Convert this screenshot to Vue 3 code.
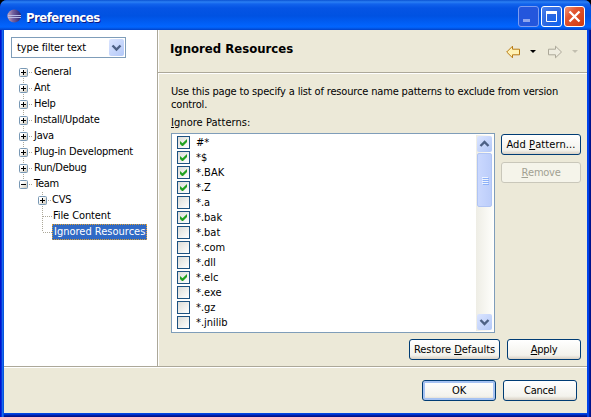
<script setup>
const tree = [
  { label: 'General', open: false }, { label: 'Ant', open: false }, { label: 'Help', open: false },
  { label: 'Install/Update', open: false }, { label: 'Java', open: false },
  { label: 'Plug-in Development', open: false }, { label: 'Run/Debug', open: false }, { label: 'Team', open: true },
]
const children = [{ label: 'CVS', box: true }, { label: 'File Content' }, { label: 'Ignored Resources', selected: true }]
const patterns = [
  ['#*', 1], ['*$', 1], ['*.BAK', 1], ['*.Z', 1], ['*.a', 0], ['*.bak', 1], ['*.bat', 0],
  ['*.com', 0], ['*.dll', 0], ['*.elc', 1], ['*.exe', 0], ['*.gz', 0], ['*.jnilib', 0],
]
</script>

<template>
  <div class="window">
    <header class="titlebar">
      <svg class="logo" width="16" height="16" viewBox="0 0 16 16">
        <defs><linearGradient id="lg" x1="0" x2="1"><stop offset="0" stop-color="#c9a9bd" /><stop offset=".4" stop-color="#75619f" /><stop offset="1" stop-color="#2c2470" /></linearGradient></defs>
        <ellipse cx="7.2" cy="8" rx="6.8" ry="6.5" fill="url(#lg)" />
        <path d="M1 7.5h13M1 9.5h13" stroke="#b9bde6" stroke-width="1" />
      </svg>
      <span class="title">Preferences</span>
      <div class="winbtns">
        <span class="wb min"><svg width="21" height="21"><rect x="5" y="13" width="7" height="3" fill="#8ea5ee" /></svg></span>
        <span class="wb"><svg width="21" height="21"><path d="M5.5 5v10.5h10V5M5 6h11" fill="none" stroke="#fff" /><rect x="5" y="5" width="11" height="3" fill="#fff" /></svg></span>
        <span class="wb close"><svg width="21" height="21"><path d="M5.5 5.5l10 10M15.5 5.5l-10 10" stroke="#fff" stroke-width="2.3" /></svg></span>
      </div>
    </header>
    <div class="main">
      <aside class="side">
        <div class="combo"><span class="t">type filter text</span><span class="drop"><svg width="15" height="17"><path d="M3.5 6.5l4 4 4-4" fill="none" stroke="#4d6185" stroke-width="2.4" /></svg></span></div>
        <div class="tree">
          <div v-for="(n, i) in tree" :key="n.label" class="node" :class="{ first: i === 0, last: i === tree.length - 1 }">
            <svg class="exp" width="9" height="9"><use :href="n.open ? '#minus' : '#plus'" /></svg><i class="dash" /><span class="t">{{ n.label }}</span>
          </div>
          <div v-for="n in children" :key="n.label" class="node child" :class="{ last: n.selected }">
            <svg v-if="n.box" class="exp" width="9" height="9"><use href="#plus" /></svg><i class="dash" :class="{ long: !n.box }" /><span class="t" :class="{ sel: n.selected }">{{ n.label }}</span>
          </div>
        </div>
      </aside>
      <section class="page">
        <div class="head">
          <h1>Ignored Resources</h1>
          <svg class="nav" width="76" height="14" viewBox="0 0 76 14">
            <path d="M.7 7L6.5 1.2v3h7v5.6h-7v3z" fill="#fff2b4" stroke="#b87a14" />
            <path d="M24 5h6l-3 3z" fill="#000" />
            <path d="M55.5 7L49.5 1.2v3h-7v5.6h7v3z" fill="#eeecdf" stroke="#aca899" />
            <path d="M66 5h6l-3 3z" fill="#c2bfb0" />
          </svg>
        </div>
        <div class="body">
          <p class="t intro">Use this page to specify a list of resource name patterns to exclude from version<br>control.</p>
          <p class="t lbl"><u>I</u>gnore Patterns:</p>
          <div class="cols">
            <div class="list">
              <div class="rows">
                <div v-for="p in patterns" :key="p[0]" class="row">
                  <span class="cb"><svg v-if="p[1]" width="11" height="11"><path d="M2 4v3l2 2h1l4-4V2L4.5 6.2z" fill="#21a121" /></svg></span><span class="t">{{ p[0] }}</span>
                </div>
              </div>
              <div class="sb">
                <span class="arrow"><svg width="15" height="16"><path d="M3.5 10l4-4 4 4" fill="none" stroke="#4d6185" stroke-width="2.4" /></svg></span>
                <span class="thumb"><i /><i /><i /><i /></span>
                <span class="arrow down"><svg width="15" height="16"><path d="M3.5 6l4 4 4-4" fill="none" stroke="#4d6185" stroke-width="2.4" /></svg></span>
              </div>
            </div>
            <div class="acts">
              <button class="btn t add">Add&nbsp;<u>P</u>attern...</button>
              <button class="btn t off"><u>R</u>emove</button>
            </div>
          </div>
          <div class="foot">
            <button class="btn t wide">Restore&nbsp;<u>D</u>efaults</button>
            <button class="btn t apply"><u>A</u>pply</button>
          </div>
        </div>
      </section>
    </div>
    <footer class="bottom">
      <button class="btn t dlg def">OK</button>
      <button class="btn t dlg">Cancel</button>
    </footer>
    <svg width="0" height="0" class="defs">
      <defs>
        <linearGradient id="bx" x1="0" y1="0" x2="1" y2="1"><stop offset=".3" stop-color="#fff" /><stop offset="1" stop-color="#c9c3b4" /></linearGradient>
        <g id="minus"><rect x=".5" y=".5" width="8" height="8" rx="1" fill="url(#bx)" stroke="#7898b5" /><path d="M2 4.5h5" stroke="#000" /></g>
        <g id="plus"><use href="#minus" /><path d="M4.5 2v5" stroke="#000" /></g>
      </defs>
    </svg>
  </div>
</template>

<style>
body { margin: 0; overflow: hidden; background: #000; }
</style>
<style scoped>
* { box-sizing: border-box; }
.window { width: 591px; height: 417px; display: flex; flex-direction: column; padding: 0 4px 4px; border-radius: 7px 7px 0 0; overflow: hidden; color: #000;
  font: 11px/13px "DejaVu Sans Condensed", "DejaVu Sans", sans-serif; font-stretch: condensed;
  background: linear-gradient(90deg, #0013cf 0 1px, #0831d9 1px 2px, #166aee 2px 3px, #0855dd 3px 4px, transparent 4px 587px, #0042ea 587px 589px, #001ea0 589px 590px, #00138c 590px), linear-gradient(#0046e0 0 414px, #0033d0 414px 415px, #001ea0 415px 416px, #00138c 416px); }
.t { letter-spacing: -.25px; white-space: nowrap; }
.titlebar { flex: none; height: 30px; margin: 0 -4px; padding: 0 6px; display: flex; align-items: center;
  background: linear-gradient(#0a52d2 0, #2b80f4 2px, #1263ec 4px, #0554e4 8px, #0052e2 16px, #0160f8 24px, #0265ff 27px, #0350dc 29px, #0040c8 30px); }
.logo { margin: 2px 0 0 1px; }
.title { font: bold 13px/16px "DejaVu Sans Condensed", sans-serif; font-stretch: condensed; color: #fff; text-shadow: 1px 1px #0a1883; margin: 5px 0 0 3px; letter-spacing: -.5px; }
.winbtns { margin-left: auto; display: flex; gap: 2px; padding-top: 3px; }
.wb { width: 21px; height: 21px; border: 1px solid #fff; border-radius: 3px; background: radial-gradient(circle at 80% 85%, #1264ef, #2a66e0 50%, #4d83ee); }
.wb svg { display: block; margin: -1px; }
.wb.min { border-color: #7d9cf0; background: #2456dc; }
.wb.close { background: linear-gradient(135deg, #ee9579, #e25530 35%, #cf3a10); }
.main { flex: none; height: 336px; display: flex; background: #ece9d8; }
.side { width: 153px; background: #fff; padding: 7px 0 0 7px; flex: none; }
.combo { width: 115px; height: 21px; border: 1px solid #7f9db9; display: flex; align-items: center; justify-content: space-between; padding: 0 1px 0 5px; }
.combo .t { letter-spacing: -.12px; }
.drop { width: 15px; height: 17px; background: linear-gradient(135deg, #dbe5ff, #b3c8f8); border-radius: 2px; }
.drop svg, .arrow svg { display: block; }
.tree { padding: 6px 0 0 8px; }
.node { height: 16px; display: flex; align-items: center; background: repeating-linear-gradient(#aca899 0 1px, #fff 1px 2px) 4px 0 / 1px 16px no-repeat; }
.node.first { background-position: 4px 8px; }
.node.last { background-size: 1px 8px; }
.exp { flex: none; display: block; }
.dash { width: 4px; height: 1px; margin: 0 1px; background: repeating-linear-gradient(90deg, #aca899 0 1px, #fff 1px 2px); }
.dash.long { width: 9px; margin: 0 0 0 5px; }
.node .t { padding: 0 0 2px; height: 16px; line-height: 15px; }
.child { margin-left: 19px; }
.child .exp + .dash { margin-right: 0; }
.child .long + .t { padding-left: 1px; letter-spacing: -.1px; }
.node .t.sel { background: #316ac5; color: #fff; outline: 1px dotted #e0a030; outline-offset: -1px; width: 95px; padding-left: 2px; flex: none; letter-spacing: 0; }
.page { flex: 1; border-left: 1px solid #aca899; box-shadow: inset 1px 0 #fff; display: flex; flex-direction: column; }
.head { height: 43px; border-bottom: 1px solid #aca899; box-shadow: 0 1px #fff; display: flex; justify-content: space-between; padding: 11px 5px 0 12px; }
h1 { margin: 0; font: bold 13px/16px "DejaVu Sans Condensed", sans-serif; font-stretch: condensed; letter-spacing: 0; }
.nav { margin-top: 4px; }
.body { padding: 12px 6px 0 13px; }
p { margin: 0; }
.intro { letter-spacing: -.16px; }
.lbl { margin: 5px 0 4px; letter-spacing: .05px; }
.cols { display: flex; gap: 6px; }
.list { width: 324px; height: 200px; border: 1px solid #7f9db9; background: #fff; display: flex; justify-content: space-between; padding: 1px; }
.rows { padding-left: 4px; }
.row { height: 15px; display: flex; align-items: center; gap: 6px; }
.cb { width: 13px; height: 13px; border: 1px solid #1c5180; background: linear-gradient(135deg, #dcdcd7, #fff); }
.cb svg { display: block; }
.row .t { letter-spacing: 0; }
.sb { width: 17px; background: linear-gradient(90deg, #eeede5, #fefefb); display: flex; flex-direction: column; align-items: center; }
.arrow { width: 15px; height: 16px; border-radius: 2px; background: linear-gradient(135deg, #dbe5ff, #b3c8f8); margin-top: 1px; }
.thumb { width: 15px; height: 54px; margin-top: 1px; border: 1px solid #b0c4f4; border-radius: 2px; background: linear-gradient(90deg, #cad8fe, #bccdfa); display: flex; flex-direction: column; align-items: center; justify-content: center; gap: 1px; }
.thumb i { width: 6px; height: 1px; background: #eef4fe; box-shadow: 1px 1px #8cb0f8; }
.down { margin: auto 0 1px; }
.acts { display: flex; flex-direction: column; gap: 7px; padding-top: 1px; }
.btn { font-family: inherit; font-size: 11px; font-stretch: condensed; width: 80px; height: 21px; padding: 0 0 1px; border: 1px solid #003c74; border-radius: 3px; color: #000; background: linear-gradient(#fff, #f3f2ec 80%, #d8d0c4); display: flex; align-items: center; justify-content: center; }
.btn.add { letter-spacing: .1px; }
.off { border-color: #c9c7ba; background: #f5f4ea; color: #a1a192; }
.foot { display: flex; gap: 7px; justify-content: flex-end; padding-top: 6px; }
.btn.wide { width: 91px; letter-spacing: -.05px; }
.btn.apply { width: 74px; }
.bottom { flex: 1; border-top: 1px solid #aca899; box-shadow: inset 0 1px #fff; background: #ece9d8; display: flex; justify-content: flex-end; gap: 7px; padding: 13px 10px 0 0; }
.dlg { width: 74px; }
.def { box-shadow: inset 0 0 0 2px #a6c2f2; }
.defs { position: absolute; }
</style>
